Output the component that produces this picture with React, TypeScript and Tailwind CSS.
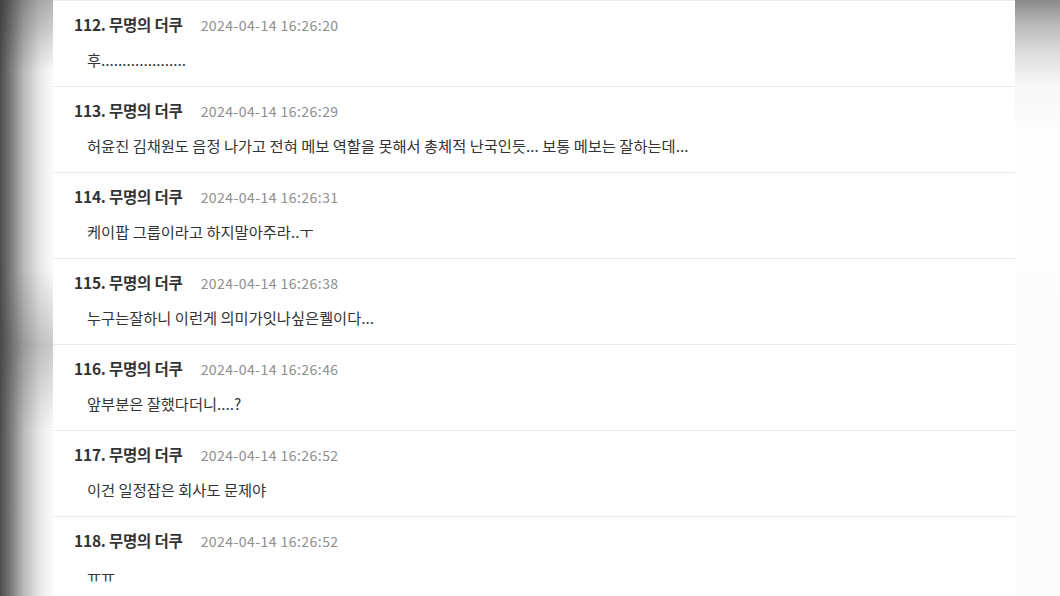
import React from "react";

type Comment = {
  no: number;
  author: string;
  time: string;
  body: string;
};

// Comment thread entries, in posting order
const comments: Comment[] = [
  { no: 112, author: "무명의 더쿠", time: "2024-04-14 16:26:20", body: "후...................." },
  {
    no: 113,
    author: "무명의 더쿠",
    time: "2024-04-14 16:26:29",
    body: "허윤진 김채원도 음정 나가고 전혀 메보 역할을 못해서 총체적 난국인듯... 보통 메보는 잘하는데...",
  },
  { no: 114, author: "무명의 더쿠", time: "2024-04-14 16:26:31", body: "케이팝 그룹이라고 하지말아주라..ㅜ" },
  { no: 115, author: "무명의 더쿠", time: "2024-04-14 16:26:38", body: "누구는잘하니 이런게 의미가잇나싶은퀠이다..." },
  { no: 116, author: "무명의 더쿠", time: "2024-04-14 16:26:46", body: "앞부분은 잘했다더니....?" },
  { no: 117, author: "무명의 더쿠", time: "2024-04-14 16:26:52", body: "이건 일정잡은 회사도 문제야" },
  { no: 118, author: "무명의 더쿠", time: "2024-04-14 16:26:52", body: "ㅠㅠ" },
];

function CommentRow({ c }: { c: Comment }) {
  return (
    <div className="h-[86px] shrink-0 border-b border-[#e9e9e9] pl-[21px] pt-[12px]">
      <div className="flex items-baseline">
        <span className="text-[15.5px] font-bold tracking-[-0.2px] text-[#333]">
          {c.no}. {c.author}
        </span>
        <span className="ml-[18px] text-[14px] tracking-[0.45px] text-[#8e8e8e]">{c.time}</span>
      </div>
      <p className="mt-[12px] pl-[13px] text-[15.3px] text-[#333]">{c.body}</p>
    </div>
  );
}

export default function App() {
  return (
    <div
      className="flex h-[596px] w-[1060px] overflow-hidden bg-white"
      style={{ fontFamily: '"Noto Sans CJK KR", "Noto Sans", sans-serif' }}
    >
      {/* blurred backdrop on the left edge */}
      <div className="w-[53px] shrink-0 bg-[linear-gradient(to_bottom,rgba(40,40,40,0.35),rgba(255,255,255,0)_12%,rgba(255,255,255,0)_45%,rgba(60,60,60,0.25)_58%,rgba(255,255,255,0)_72%),linear-gradient(to_right,#4c4c4c,#7a7a7a_20%,#b9b9b9_45%,#e8e8e8_75%,#fbfbfb)]" />

      {/* comment list */}
      <div className="flex w-[962px] shrink-0 flex-col border-t border-[#ececec] bg-white">
        {comments.map((c) => (
          <CommentRow key={c.no} c={c} />
        ))}
      </div>

      {/* backdrop on the right edge */}
      <div className="flex-1 bg-[linear-gradient(to_bottom,#8a8a8a,#b8b8b8_4%,#dedede_9%,#f6f6f6_14%,#fdfdfd_22%,#fcfcfc)]" />
    </div>
  );
}
